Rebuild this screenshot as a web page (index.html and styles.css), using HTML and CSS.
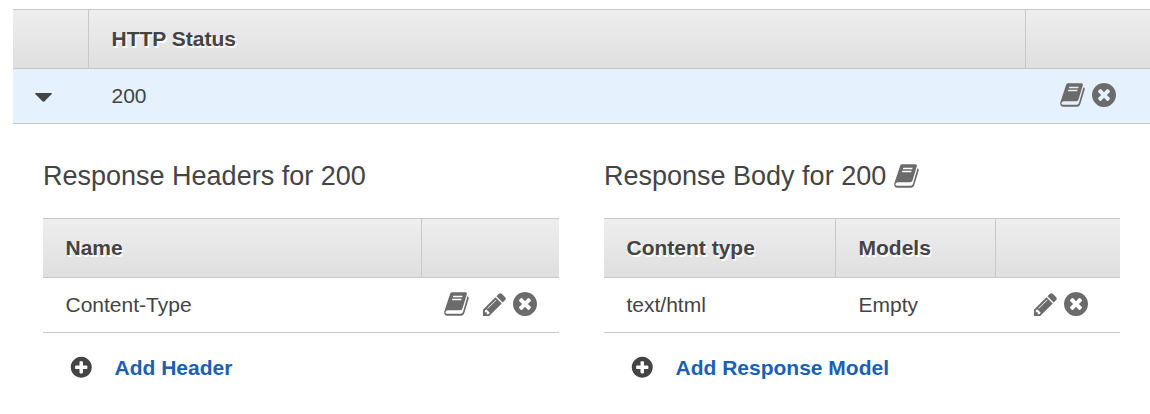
FILE: index.html
```
<!DOCTYPE html>
<html lang="en">
<head>
<meta charset="utf-8">
<title>Method Response</title>
<link rel="stylesheet" href="styles.css">
</head>
<body>
<svg class="sprite" aria-hidden="true">
  <symbol id="book" viewBox="0 0 76 72"><path fill-rule="evenodd" d="M24 1h40q6 0 4.500 6L56 49q-2 6-7 6H12q-6 0-7.500 5-1 5 4 5H51q4 0 6-5L70.500 13q5 1 3.500 7L61 63q-2 8-9 8H9Q-1 70 1 58L18 7q1-6 6-6zM28 11h28l-1.500 5h-28zM25 20h28l-1.500 5h-28z"/></symbol>
  <symbol id="pencil" viewBox="0 0 1792 1792"><path d="M491 1536l91-91-235-235-91 91v107h128v128h107zm523-928q0-22-22-22-10 0-17 7l-542 542q-7 7-7 17 0 22 22 22 10 0 17-7l542-542q7-7 7-17zm-54-192l416 416-832 832h-416v-416zm683 96q0 53-37 90l-166 166-416-416 166-165q36-38 90-38 53 0 91 38l235 234q37 39 37 91z"/></symbol>
  <symbol id="times" viewBox="0 0 1792 1792"><path d="M1277 1122q0-26-19-45l-181-181 181-181q19-19 19-45 0-27-19-46l-90-90q-19-19-46-19-26 0-45 19l-181 181-181-181q-19-19-45-19-27 0-46 19l-90 90q-19 19-19 46 0 26 19 45l181 181-181 181q-19 19-19 45 0 27 19 46l90 90q19 19 46 19 26 0 45-19l181-181 181 181q19 19 45 19 27 0 46-19l90-90q19-19 19-46zm387-226q0 209-103 385.5t-279.5 279.5-385.5 103-385.5-103-279.5-279.5-103-385.5 103-385.5 279.5-279.5 385.5-103 385.5 103 279.5 279.5 103 385.5z"/></symbol>
  <symbol id="plus" viewBox="0 0 1792 1792"><path d="M1344 960v-128q0-26-19-45t-45-19h-256v-256q0-26-19-45t-45-19h-128q-26 0-45 19t-19 45v256h-256q-26 0-45 19t-19 45v128q0 26 19 45t45 19h256v256q0 26 19 45t45 19h128q26 0 45-19t19-45v-256h256q26 0 45-19t19-45zm320-64q0 209-103 385.5t-279.5 279.5-385.5 103-385.5-103-279.5-279.5-103-385.5 103-385.5 279.5-279.5 385.5-103 385.5 103 279.5 279.5 103 385.5z"/></symbol>
</svg>

<div class="table status">
  <div class="row head"><span class="cell"></span><span class="cell">HTTP Status</span><span class="cell"></span></div>
  <div class="row selected">
    <span class="cell toggle"><svg class="caret" viewBox="0 0 17 9"><path d="M1 0h15q1.300 .300 .5 1.200L9.300 8.400q-.8.700-1.600 0L.5 1.200Q-.3.300 1 0z"/></svg></span>
    <span class="cell">200</span>
    <span class="cell actions"><svg class="icon book"><use href="#book"/></svg><svg class="icon"><use href="#times"/></svg></span>
  </div>
</div>

<div class="panels">
  <section class="panel">
    <h2 class="title">Response Headers for 200</h2>
    <div class="table headers">
      <div class="row head"><span class="cell">Name</span><span class="cell"></span></div>
      <div class="row">
        <span class="cell">Content-Type</span>
        <span class="cell actions"><svg class="icon book book-spaced"><use href="#book"/></svg><svg class="icon pencil"><use href="#pencil"/></svg><svg class="icon"><use href="#times"/></svg></span>
      </div>
    </div>
    <a class="add"><svg class="add-icon"><use href="#plus"/></svg><span>Add Header</span></a>
  </section>
  <section class="panel">
    <h2 class="title"><span>Response Body for 200</span><svg class="icon book"><use href="#book"/></svg></h2>
    <div class="table body">
      <div class="row head"><span class="cell">Content type</span><span class="cell">Models</span><span class="cell"></span></div>
      <div class="row">
        <span class="cell">text/html</span><span class="cell">Empty</span>
        <span class="cell actions"><svg class="icon pencil"><use href="#pencil"/></svg><svg class="icon"><use href="#times"/></svg></span>
      </div>
    </div>
    <a class="add"><svg class="add-icon"><use href="#plus"/></svg><span>Add Response Model</span></a>
  </section>
</div>
</body>
</html>
```
FILE: styles.css
```
* { box-sizing: border-box; }
body {
  margin: 0;
  padding: 9px 0 0 13px;
  background: #fff;
  color: #444;
  font: 21px/24px "Liberation Sans", Arial, sans-serif;
  overflow: hidden;
}
.sprite { display: none; }
.table { border-top: 1px solid #c8c8c8; }
.row {
  display: grid;
  height: 55px;
  border-bottom: 1px solid #c8c8c8;
}
.status .row { grid-template-columns: 76px 937px 1fr; }
.headers .row { grid-template-columns: 379px 1fr; }
.body .row { grid-template-columns: 232px 160px 1fr; }
.cell {
  display: flex;
  align-items: center;
  padding-left: 22.500px;
  border-right: 1px solid transparent;
}
.cell:last-child { border-right: 0; }
.head {
  height: 59px;
  background: linear-gradient(#eee, #dfdfdf);
  font-weight: bold;
  text-shadow: 1.500px 1.500px 0 #fff;
}
.head .cell { border-right-color: #c8c8c8; }
.head .cell:last-child { border-right: 0; }
.selected { background: #e5f1fd; }
.toggle { padding-left: 22px; }
.icon { width: 28px; height: 28px; fill: #6b6b6b; flex: none; }
.book { width: 25.300px; height: 24px; }
.pencil { width: 27px; height: 27px; }
.caret { width: 17px; height: 9px; fill: #444; margin-top: 3px; }
.actions { justify-content: flex-end; gap: 4px; padding: 0 20px 2px 0; }
.status .actions { padding-right: 32px; }
.body .actions { padding-right: 30px; }
.actions .pencil { margin-right: -1px; }
.actions .book { margin-right: 1px; }
.actions .book-spaced { margin-right: 8px; }
.panels { display: flex; gap: 45px; padding: 33px 0 0 30px; }
.panel { width: 516px; flex: none; }
.title {
  display: flex;
  align-items: center;
  gap: 7.500px;
  height: 36px;
  margin: 0 0 25px;
  padding-top: 1px;
  font-size: 27px;
  font-weight: normal;
  white-space: nowrap;
}
.add {
  display: flex;
  align-items: center;
  gap: 21px;
  padding: 22px 0 0 26px;
  color: #1b60b3;
  font-weight: bold;
}
.add span { padding-top: 1px; }
.add-icon { width: 24.500px; height: 24.500px; fill: #444; }
```
